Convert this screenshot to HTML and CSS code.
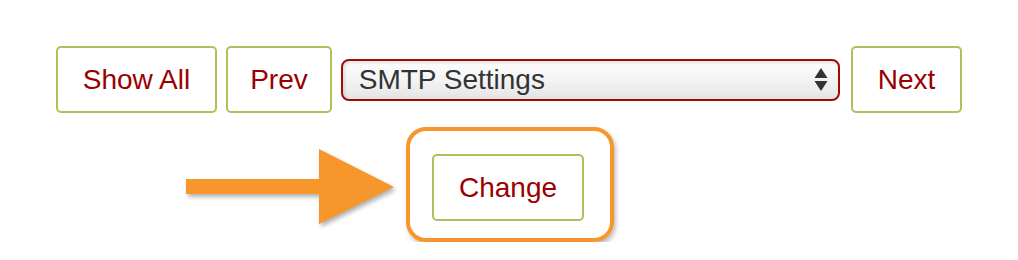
FILE: index.html
```html
<!DOCTYPE html>
<html lang="en">
<head>
    <meta charset="UTF-8">
    <meta name="viewport" content="width=device-width, initial-scale=1.0">
    <title>Settings</title>
    <link rel="stylesheet" href="styles.css">
</head>
<body>
    <div class="nav">
        <button class="btn">Show All</button>
        <button class="btn btn-prev">Prev</button>
        <div class="picker">
            <select class="select">
                <option>SMTP Settings</option>
                <option>General</option>
                <option>Security</option>
            </select>
            <svg class="picker-icon" width="14" height="26" viewBox="0 0 14 26">
                <path d="M7 1 L13.5 11 L0.5 11 Z" fill="#333"/>
                <path d="M0.5 14 L13.5 14 L7 24 Z" fill="#333"/>
            </svg>
        </div>
        <button class="btn btn-next">Next</button>
    </div>
    <div class="action">
        <div class="highlight">
            <svg class="pointer" width="210" height="78" viewBox="0 0 210 78">
                <path d="M0 30 L133 30 L133 0 L208 38 L133 75 L133 45 L0 45 Z" fill="#f7962a"/>
            </svg>
            <button class="btn">Change</button>
        </div>
    </div>
</body>
</html>
```

FILE: styles.css
```css
* {
    margin: 0;
    padding: 0;
    box-sizing: border-box;
}
body {
    background: #fff;
    font-family: "Liberation Sans", Arial, sans-serif;
    padding-top: 46px;
}
.nav {
    display: flex;
    justify-content: center;
    align-items: center;
    gap: 9px;
}
.btn {
    height: 67px;
    padding: 0 25px;
    background: #fff;
    border: 2px solid #a9c25a;
    border-radius: 5px;
    color: #9a0000;
    font-family: inherit;
    font-size: 28px;
}
.btn-prev {
    padding: 0 22px;
}
.btn-next {
    margin-left: 2px;
}
.picker {
    position: relative;
    width: 499px;
}
.select {
    appearance: none;
    -webkit-appearance: none;
    width: 100%;
    height: 42px;
    padding: 0 40px 0 16px;
    border: 2px solid #a10a0a;
    border-radius: 8px;
    background: linear-gradient(#fdfdfd, #f4f4f4 50%, #e4e4e4);
    box-shadow: inset 2px 2px 3px rgba(0, 0, 0, 0.1);
    color: #333;
    font-family: inherit;
    font-size: 28px;
    outline: none;
}
.picker-icon {
    position: absolute;
    right: 12px;
    top: 8px;
    pointer-events: none;
}
.action {
    display: flex;
    justify-content: center;
    margin-top: 14px;
    padding-left: 2px;
}
.highlight {
    position: relative;
    padding: 23px 26px 17px 22px;
    border: 4px solid #f7962a;
    border-radius: 20px;
    box-shadow: 2px 3px 4px rgba(0, 0, 0, 0.25);
}
.pointer {
    position: absolute;
    right: 100%;
    top: 18px;
    margin-right: 14px;
    filter: drop-shadow(2px 3px 2px rgba(0, 0, 0, 0.3));
}
```
